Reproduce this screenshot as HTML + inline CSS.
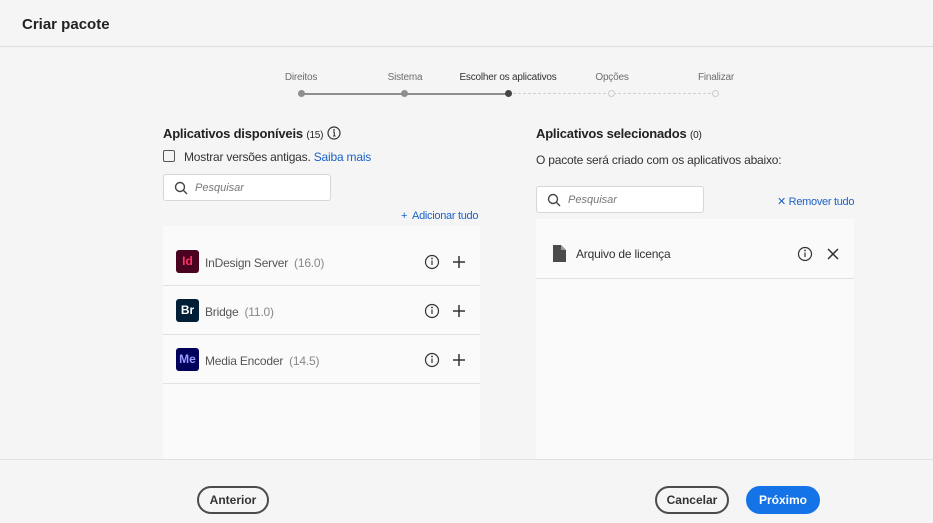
<!DOCTYPE html>
<html><head><style>
*{box-sizing:border-box;margin:0;padding:0}
body{width:933px;height:523px;background:#f5f5f5;font-family:"Liberation Sans",sans-serif;color:#2c2c2c;position:relative;overflow:hidden}
.abs{position:absolute}
.hdr{left:0;top:0;width:933px;height:47px;border-bottom:1px solid #dedede;background:#f5f5f5}
.hdr span{position:absolute;left:22px;top:16px;font-size:15px;font-weight:bold;color:#222}
.step{font-size:10px;color:#6e6e6e;top:72px;transform:translateX(-50%);white-space:nowrap;letter-spacing:-0.2px}
.dot{width:7px;height:7px;border-radius:50%;top:90px;background:#8e8e8e}
.h2{font-size:13px;font-weight:bold;color:#222;letter-spacing:-0.2px}
.h2 small{font-weight:normal;font-size:10px}
.search{border:1px solid #d6d6d6;background:#fff;border-radius:3px;height:27px;font-size:11px;font-style:italic;color:#777;padding:7px 0 0 31px}
.search svg{position:absolute;left:10px;top:6px}
.panel{background:#fafafa}
.row{position:absolute;left:0;width:317px;height:49px;border-bottom:1px solid #e2e2e2}
.ico{position:absolute;left:13px;top:13px;width:23px;height:23px;border-radius:3px;font-size:12px;font-weight:bold;text-align:center;line-height:23px}
.nm{position:absolute;left:42px;top:19px;font-size:12px;color:#555;letter-spacing:-0.2px}
.nm b{font-weight:normal;color:#888;margin-left:6px}
.btn{position:absolute;height:28px;border:2px solid #4b4b4b;border-radius:14px;font-size:12px;font-weight:bold;text-align:center;line-height:24px;color:#333}
</style></head><body>
<div class="abs hdr"><span>Criar pacote</span></div>
<div class="abs step" style="left:301px">Direitos</div>
<div class="abs step" style="left:405px">Sistema</div>
<div class="abs step" style="left:508px;color:#333">Escolher os aplicativos</div>
<div class="abs step" style="left:612px">Opções</div>
<div class="abs step" style="left:716px">Finalizar</div>
<div class="abs" style="left:301px;top:93px;width:207px;height:2px;background:#8e8e8e"></div>
<div class="abs" style="left:508px;top:93px;width:208px;border-top:1px dashed #cfcfcf"></div>
<div class="abs dot" style="left:298px"></div>
<div class="abs dot" style="left:401px"></div>
<div class="abs dot" style="left:505px;background:#444"></div>
<div class="abs dot" style="left:608px;background:#f5f5f5;border:1px solid #ccc"></div>
<div class="abs dot" style="left:712px;background:#f5f5f5;border:1px solid #ccc"></div>

<div class="abs h2" style="left:163px;top:126px">Aplicativos disponíveis <small>(15)</small>
<svg width="14" height="14" viewBox="0 0 14 14" style="vertical-align:-2px"><circle cx="7" cy="7" r="6" fill="none" stroke="#333" stroke-width="1.2"/><circle cx="7" cy="4" r=".9" fill="#333"/><path d="M6 6h1.3v4M6 10h2.6" stroke="#333" stroke-width="1.1" fill="none"/></svg></div>
<div class="abs" style="left:163px;top:150px;width:12px;height:12px;border:1.5px solid #555;border-radius:2px"></div>
<div class="abs" style="left:184px;top:150px;font-size:12px;color:#333;letter-spacing:-0.2px">Mostrar versões antigas. <span style="color:#1b62c9">Saiba mais</span></div>
<div class="abs search" style="left:163px;top:174px;width:168px"><svg width="14" height="14" viewBox="0 0 14 14"><circle cx="6" cy="6" r="4.5" fill="none" stroke="#444" stroke-width="1.4"/><path d="M9.3 9.3L13 13" stroke="#444" stroke-width="1.4"/></svg>Pesquisar</div>
<div class="abs" style="left:401px;top:210px;font-size:11px;color:#1b62c9;letter-spacing:-0.3px">+&nbsp; Adicionar tudo</div>

<div class="abs panel" style="left:163px;top:226px;width:317px;height:233px">
<div class="row" style="top:11px"><div class="ico" style="background:#49021f;color:#ff3366">Id</div><div class="nm">InDesign Server<b>(16.0)</b></div></div>
<div class="row" style="top:60px"><div class="ico" style="background:#001e36;color:#fff">Br</div><div class="nm">Bridge<b>(11.0)</b></div></div>
<div class="row" style="top:109px"><div class="ico" style="background:#00005b;color:#9999ff">Me</div><div class="nm">Media Encoder<b>(14.5)</b></div></div>
</div>
<div class="abs" style="left:0;top:0">
<svg width="933" height="523" style="position:absolute">
<g fill="none" stroke="#333" stroke-width="1.2">
<circle cx="432" cy="262" r="6.5"/><circle cx="432" cy="311" r="6.5"/><circle cx="432" cy="360" r="6.5"/><circle cx="805" cy="254" r="6.5"/>
<path d="M459 256v12M453 262h12M459 305v12M453 311h12M459 354v12M453 360h12" stroke-width="1.5"/>
<path d="M828 249l10 10M838 249l-10 10" stroke-width="1.5"/>
<path d="M432 260.5v4.5M432 309.5v4.5M432 358.5v4.5M805 252.5v4.5"/>
</g>
<g fill="#333"><circle cx="432" cy="258.5" r=".9"/><circle cx="432" cy="307.5" r=".9"/><circle cx="432" cy="356.5" r=".9"/><circle cx="805" cy="250.5" r=".9"/></g>
<path d="M553 245h8l5 5v12h-13z" fill="#4b4b4b"/><path d="M561 245v5h5" fill="#9a9a9a"/>
</svg></div>

<div class="abs h2" style="left:536px;top:126px">Aplicativos selecionados <small>(0)</small></div>
<div class="abs" style="left:536px;top:153px;font-size:12px;color:#333;letter-spacing:-0.2px">O pacote será criado com os aplicativos abaixo:</div>
<div class="abs search" style="left:536px;top:186px;width:168px"><svg width="14" height="14" viewBox="0 0 14 14"><circle cx="6" cy="6" r="4.5" fill="none" stroke="#444" stroke-width="1.4"/><path d="M9.3 9.3L13 13" stroke="#444" stroke-width="1.4"/></svg>Pesquisar</div>
<div class="abs" style="left:777px;top:195px;font-size:11px;color:#1b62c9;letter-spacing:-0.3px">✕ Remover tudo</div>
<div class="abs panel" style="left:536px;top:219px;width:318px;height:240px;z-index:-1">
<div style="position:absolute;left:0;top:59px;width:318px;border-bottom:1px solid #e2e2e2"></div>
<div style="position:absolute;left:40px;top:28px;font-size:12px;color:#333;letter-spacing:-0.2px">Arquivo de licença</div>
</div>

<div class="abs" style="left:0;top:459px;width:933px;height:64px;border-top:1px solid #e0e0e0;background:#f5f5f5"></div>
<div class="btn" style="left:197px;top:486px;width:72px">Anterior</div>
<div class="btn" style="left:655px;top:486px;width:74px">Cancelar</div>
<div class="btn" style="left:746px;top:486px;width:74px;background:#1473e6;border-color:#1473e6;color:#fff">Próximo</div>
</body></html>
